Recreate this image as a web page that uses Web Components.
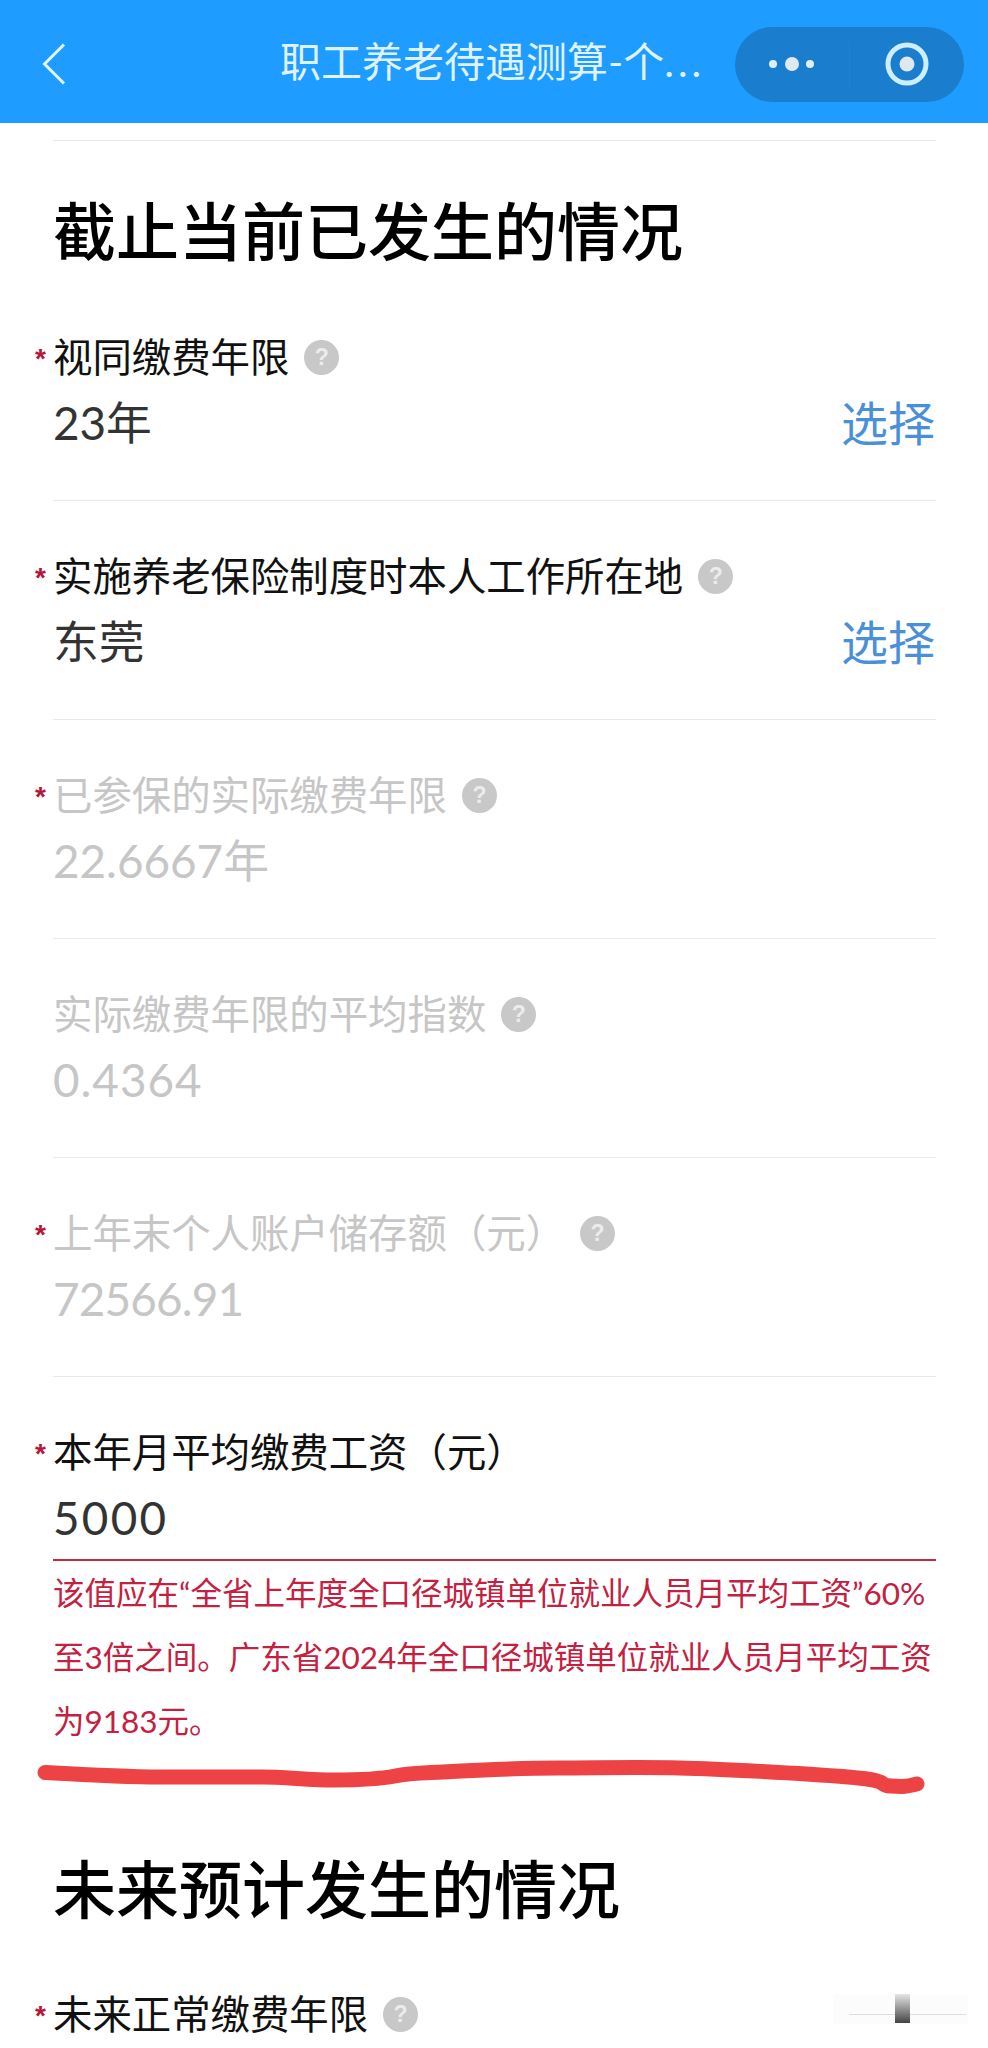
<!DOCTYPE html>
<html lang="zh">
<head>
<meta charset="utf-8">
<title>职工养老待遇测算</title>
<style>
    html,body{
        margin: 0;
        height: 2048px;
        overflow: hidden;
        background: #fff;
    }
    body{
        font-family: Lato, "Noto Sans CJK SC", sans-serif;
    }
</style>
</head>
<body>
<nav-bar title-text="职工养老待遇测算-个" more="..."></nav-bar>
<form-page>
    <section-title>截止当前已发生的情况</section-title>
    <form-field label="视同缴费年限" value="23年" required help action="选择"></form-field>
    <form-field label="实施养老保险制度时本人工作所在地" value="东莞" required help action="选择"></form-field>
    <form-field label="已参保的实际缴费年限" value="22.6667年" required help disabled></form-field>
    <form-field label="实际缴费年限的平均指数" value="0.4364" help disabled style="--value-spacing:1px"></form-field>
    <form-field label="上年末个人账户储存额（元）" value="72566.91" required help disabled style="--value-spacing:-.8px"></form-field>
    <form-field label="本年月平均缴费工资（元）" value="5000" required invalid style="--value-spacing:2.300px">该值应在“全省上年度全口径城镇单位就业人员月平均工资”60%至3倍之间。广东省2024年全口径城镇单位就业人员月平均工资为9183元。</form-field>
    <ink-stroke></ink-stroke>
    <section-title style="margin-bottom:-2px;--title-top:58px">未来预计发生的情况</section-title>
    <form-field label="未来正常缴费年限" required help><switch-ghost slot="over"></switch-ghost></form-field>
</form-page>
<script>
class NavBar extends HTMLElement{
    constructor(){
        super()
        this.attachShadow({mode : 'open'})
    }
    connectedCallback(){
        this.shadowRoot.innerHTML = `
            <style>
                :host{
                    display: flex;
                    align-items: center;
                    height: 123px;
                    padding: 0 24px 0 42px;
                    box-sizing: border-box;
                    background: #1e9cff;
                }
                .back{
                    width: 24px;
                    height: 42px;
                    flex: none;
                    margin-top: 5px;
                }
                .title{
                    margin-left: 214px;
                    font-size: 41px;
                    line-height: 56px;
                    color: #dff2ff;
                    white-space: nowrap;
                }
                .more{
                    letter-spacing: 4px;
                }
                .capsule{
                    display: flex;
                    margin: 5px 0 0 auto;
                    width: 229px;
                    height: 75px;
                    border-radius: 38px;
                    background: #1a7dcd;
                }
                .half{
                    flex: 1;
                    display: flex;
                    align-items: center;
                    justify-content: center;
                }
                .half + .half{
                    border-left: 1px solid #1c84d6;
                    margin: 14px 0;
                }
            </style>
            <svg class="back" viewBox="0 0 24 42"><path d="M22 1.500L2.500 21L22 40.500" fill="none" stroke="#e4f4ff" stroke-width="3"/></svg>
            <span class="title">${this.getAttribute('title-text')}<span class="more">${this.getAttribute('more')}</span></span>
            <div class="capsule">
                <div class="half">
                    <svg width="68" height="20" viewBox="0 0 68 20">
                        <circle cx="15" cy="10" r="4" fill="#dff0fa"/>
                        <circle cx="34" cy="10" r="7" fill="#e0e9ef"/>
                        <circle cx="52" cy="10" r="4" fill="#dff0fa"/>
                    </svg>
                </div>
                <div class="half">
                    <svg width="46" height="46" viewBox="0 0 46 46">
                        <circle cx="23" cy="23" r="19" fill="none" stroke="#cdeeff" stroke-width="5"/>
                        <circle cx="23" cy="23" r="7.500" fill="#dfe8ee"/>
                    </svg>
                </div>
            </div>
        `
    }
}

class FormPage extends HTMLElement{
    constructor(){
        super()
        this.attachShadow({mode : 'open'})
    }
    connectedCallback(){
        this.shadowRoot.innerHTML = `
            <style>
                :host{
                    display: block;
                    padding: 17px 52px 0 33px;
                }
                .rule{
                    height: 1px;
                    margin-left: 20px;
                    background: #e9e9e9;
                }
            </style>
            <div class="rule"></div>
            <slot></slot>
        `
    }
}

class SectionTitle extends HTMLElement{
    constructor(){
        super()
        this.attachShadow({mode : 'open'})
    }
    connectedCallback(){
        this.shadowRoot.innerHTML = `
            <style>
                :host{
                    display: block;
                    padding: var(--title-top, 55px) 0 16px 20px;
                    font-size: 63px;
                    font-weight: 500;
                    line-height: 70px;
                    color: #000;
                }
            </style>
            <slot></slot>
        `
    }
}

class FormField extends HTMLElement{
    constructor(){
        super()
        this.attachShadow({mode : 'open'})
    }
    connectedCallback(){
        const star = this.hasAttribute('required') ? '*' : ''
        const help = this.hasAttribute('help') ? '<span class="help">?</span>' : ''
        const action = this.hasAttribute('action') ? `<span class="action">${this.getAttribute('action')}</span>` : ''
        const value = this.hasAttribute('value') ? `<div class="value"><span class="text">${this.getAttribute('value')}</span>${action}</div>` : ''
        this.shadowRoot.innerHTML = `
            <style>
                :host{
                    display: block;
                    position: relative;
                    height: 219px;
                    box-sizing: border-box;
                    padding-top: 51px;
                }
                :host(:not([value])){
                    height: auto;
                    padding-top: 52px;
                }
                .row{
                    display: flex;
                    align-items: center;
                    height: 48px;
                }
                .star{
                    width: 20px;
                    flex: none;
                    padding: 3px 0 0 2px;
                    box-sizing: border-box;
                    font: bold 28px/30px "Liberation Sans", sans-serif;
                    color: #b5173a;
                }
                .label{
                    font-size: 39.400px;
                    line-height: 48px;
                    color: #111;
                    white-space: nowrap;
                }
                .help{
                    flex: none;
                    width: 35px;
                    height: 35px;
                    margin-left: 15px;
                    border-radius: 50%;
                    background: #c8c8c8;
                    color: #ececec;
                    font: bold 23px/35px "Liberation Sans", sans-serif;
                    text-align: center;
                }
                .value{
                    display: flex;
                    justify-content: space-between;
                    align-items: center;
                    height: 62px;
                    margin: 11px 0 0 20px;
                    font-size: 45.800px;
                    line-height: 62px;
                    color: #333;
                }
                .text{
                    letter-spacing: var(--value-spacing, 0);
                }
                .action{
                    font-size: 47px;
                    margin-right: 1px;
                    color: #4a90d9;
                }
                .rule{
                    position: absolute;
                    left: 20px;
                    right: 0;
                    bottom: 0;
                    height: 1px;
                    background: #eaeaea;
                }
                .error{
                    display: none;
                    margin: 10px 0 0 20px;
                    border-top: 2px solid #c8283c;
                    font-size: 31.500px;
                    line-height: 64px;
                    color: #c4203f;
                }
                :host([disabled]) .label, :host([disabled]) .value{
                    color: #c6c6c6;
                }
                :host([invalid]){
                    height: auto;
                }
                :host([invalid]) .error{
                    display: block;
                }
                :host([invalid]) .rule, :host(:not([value])) .rule{
                    display: none;
                }
            </style>
            <div class="row"><span class="star">${star}</span><span class="label">${this.getAttribute('label')}</span>${help}</div>
            ${value}
            <div class="error"><slot></slot></div>
            <div class="rule"></div>
            <slot name="over"></slot>
        `
    }
}

class InkStroke extends HTMLElement{
    constructor(){
        super()
        this.attachShadow({mode : 'open'})
    }
    connectedCallback(){
        this.shadowRoot.innerHTML = `
            <style>
                :host{
                    display: block;
                    height: 43px;
                    margin: 0 -52px 0 -33px;
                }
                svg{
                    display: block;
                    overflow: visible;
                }
            </style>
            <svg width="988" height="43" viewBox="0 0 988 43">
                <path d="M45 19.500C90 22 130 24 159 24S240 24 262 24S310 27 334 27S380 26 395 23S425 20 443 19S520 15 558 15S640 14 679 15S800 20 848 24S875 32 891 33S908 33 917 31" fill="none" stroke="#ee4344" stroke-width="15" stroke-linecap="round"/>
            </svg>
        `
    }
}

class SwitchGhost extends HTMLElement{
    constructor(){
        super()
        this.attachShadow({mode : 'open'})
    }
    connectedCallback(){
        this.shadowRoot.innerHTML = `
            <style>
                :host{
                    position: absolute;
                    left: 800px;
                    top: 56px;
                    width: 135px;
                    height: 30px;
                    background: #fcfcfc;
                }
                .bar{
                    position: absolute;
                    left: 62px;
                    top: 0;
                    width: 15px;
                    height: 29px;
                    background: linear-gradient(#e6e6e6, #444);
                }
                .line{
                    position: absolute;
                    left: 16px;
                    right: 2px;
                    top: 20px;
                    height: 1px;
                    background: #ddd;
                }
            </style>
            <div class="line"></div>
            <div class="bar"></div>
        `
    }
}

customElements.define('nav-bar',NavBar)
customElements.define('form-page',FormPage)
customElements.define('section-title',SectionTitle)
customElements.define('form-field',FormField)
customElements.define('ink-stroke',InkStroke)
customElements.define('switch-ghost',SwitchGhost)
</script>
</body>
</html>
